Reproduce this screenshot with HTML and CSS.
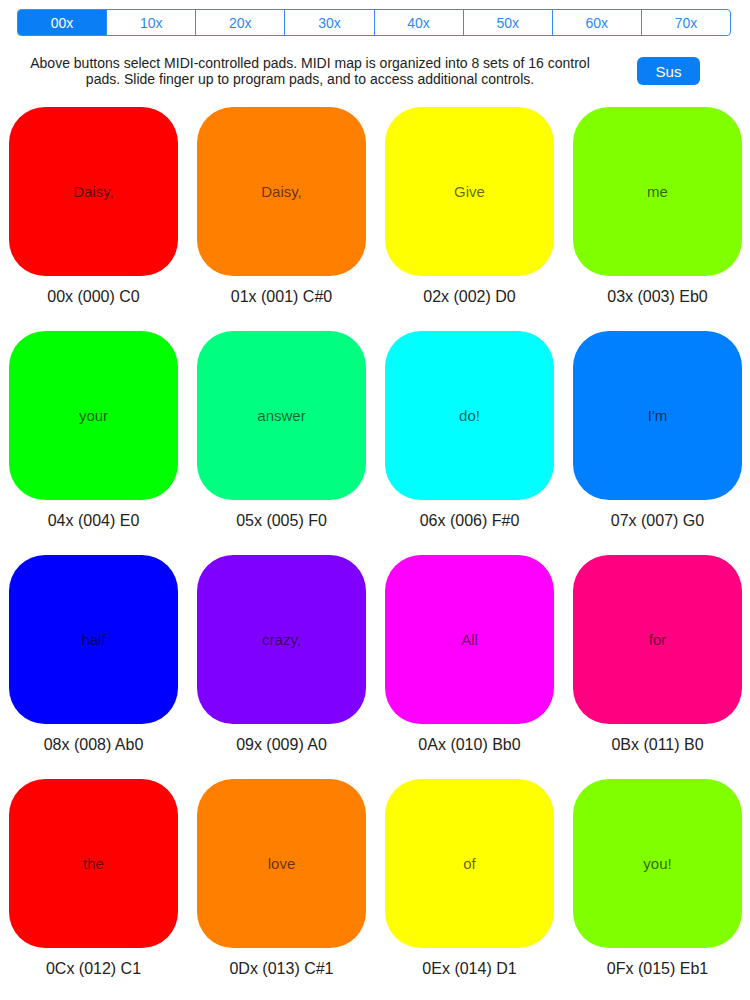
FILE: index.html
```html
<!DOCTYPE html>
<html>
<head>
<meta charset="utf-8">
<link rel="stylesheet" href="styles.css">
</head>
<body>
<div class="seg">
  <div class="seg-item active">00x</div>
  <div class="seg-item">10x</div>
  <div class="seg-item">20x</div>
  <div class="seg-item">30x</div>
  <div class="seg-item">40x</div>
  <div class="seg-item">50x</div>
  <div class="seg-item">60x</div>
  <div class="seg-item">70x</div>
</div>
<div class="info">
  <p class="desc">Above buttons select MIDI-controlled pads. MIDI map is organized into 8 sets of 16 control pads. Slide finger up to program pads, and to access additional controls.</p>
  <button class="sus">Sus</button>
</div>
<div class="grid">
  <div class="cell"><div class="pad c0">Daisy,</div><div class="label">00x (000) C0</div></div>
  <div class="cell"><div class="pad c1">Daisy,</div><div class="label">01x (001) C#0</div></div>
  <div class="cell"><div class="pad c2">Give</div><div class="label">02x (002) D0</div></div>
  <div class="cell"><div class="pad c3">me</div><div class="label">03x (003) Eb0</div></div>
  <div class="cell"><div class="pad c4">your</div><div class="label">04x (004) E0</div></div>
  <div class="cell"><div class="pad c5">answer</div><div class="label">05x (005) F0</div></div>
  <div class="cell"><div class="pad c6">do!</div><div class="label">06x (006) F#0</div></div>
  <div class="cell"><div class="pad c7">I'm</div><div class="label">07x (007) G0</div></div>
  <div class="cell"><div class="pad c8">half</div><div class="label">08x (008) Ab0</div></div>
  <div class="cell"><div class="pad c9">crazy,</div><div class="label">09x (009) A0</div></div>
  <div class="cell"><div class="pad c10">All</div><div class="label">0Ax (010) Bb0</div></div>
  <div class="cell"><div class="pad c11">for</div><div class="label">0Bx (011) B0</div></div>
  <div class="cell"><div class="pad c0">the</div><div class="label">0Cx (012) C1</div></div>
  <div class="cell"><div class="pad c1">love</div><div class="label">0Dx (013) C#1</div></div>
  <div class="cell"><div class="pad c2">of</div><div class="label">0Ex (014) D1</div></div>
  <div class="cell"><div class="pad c3">you!</div><div class="label">0Fx (015) Eb1</div></div>
</div>
</body>
</html>
```

FILE: styles.css
```css
html, body {
  margin: 0;
  padding: 0;
  background: #ffffff;
  font-family: "Liberation Sans", Arial, sans-serif;
}

.seg {
  display: flex;
  margin: 9px 0 0 17px;
  width: 714px;
  height: 27px;
  box-sizing: border-box;
  border: 1px solid #2f8ff5;
  border-radius: 4px;
  overflow: hidden;
}

.seg-item {
  flex: 1;
  display: flex;
  align-items: center;
  justify-content: center;
  font-size: 14px;
  color: #2a8af5;
  border-left: 1px solid #2f8ff5;
}

.seg-item:first-child {
  border-left: none;
}

.seg-item.active {
  background: #0a7ff5;
  color: #ffffff;
}

.info {
  display: flex;
  align-items: center;
  margin-top: 19px;
  padding-left: 20px;
}

.desc {
  margin: 0;
  width: 580px;
  font-size: 14px;
  line-height: 16px;
  color: #222222;
  text-align: center;
}

.sus {
  margin-left: 37px;
  width: 63px;
  height: 28px;
  border: none;
  border-radius: 6px;
  background: #0a7ff5;
  color: #ffffff;
  font-family: "Liberation Sans", Arial, sans-serif;
  font-size: 15px;
  padding: 0;
}

.grid {
  display: grid;
  grid-template-columns: repeat(4, 169px);
  column-gap: 19px;
  row-gap: 24px;
  margin-top: 20px;
  padding-left: 9px;
}

.cell {
  display: flex;
  flex-direction: column;
  align-items: center;
}

.pad {
  width: 169px;
  height: 169px;
  border-radius: 36px;
  display: flex;
  align-items: center;
  justify-content: center;
  font-size: 15px;
  color: rgba(0, 0, 0, 0.62);
}

.label {
  margin-top: 11px;
  line-height: 20px;
  font-size: 16px;
  color: #222222;
}

.c0 { background: #ff0000; }
.c1 { background: #ff8000; }
.c2 { background: #ffff00; }
.c3 { background: #80ff00; }
.c4 { background: #00ff00; }
.c5 { background: #00ff80; }
.c6 { background: #00ffff; }
.c7 { background: #0080ff; }
.c8 { background: #0000ff; }
.c9 { background: #8000ff; }
.c10 { background: #ff00ff; }
.c11 { background: #ff0080; }
```
